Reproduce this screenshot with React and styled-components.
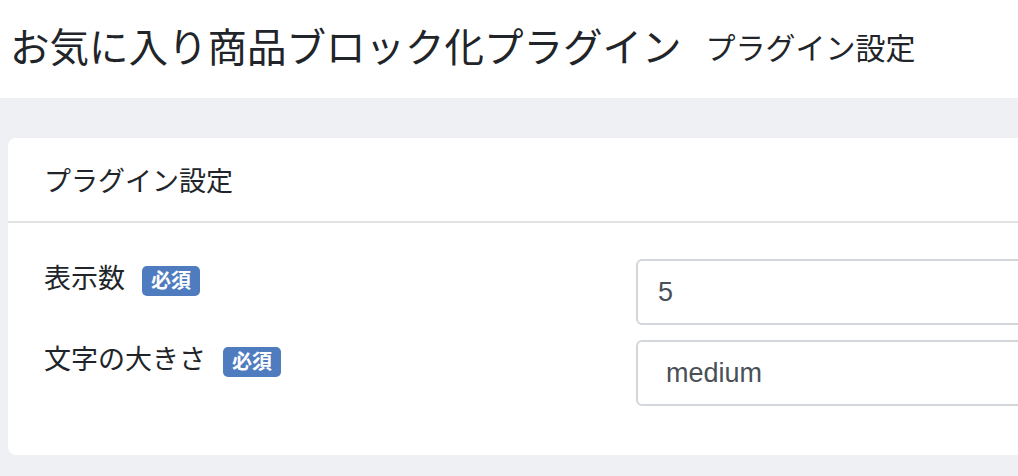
import React from 'react';
import styled, { createGlobalStyle } from 'styled-components';

const GlobalStyle = createGlobalStyle`
  html, body {
    margin: 0;
    padding: 0;
    overflow: hidden;
    background: #eef0f4;
  }
  body {
    font-family: "Liberation Sans", "Noto Sans CJK JP", sans-serif;
    color: #212529;
  }
`;

const Page = styled.div`
  width: 1400px;
  min-height: 476px;
`;

const Header = styled.header`
  display: flex;
  align-items: center;
  gap: 24px;
  height: 98px;
  padding: 0 10px;
  background: #fff;
  box-sizing: border-box;
`;

const Title = styled.h1`
  margin: 0;
  font-size: 39.5px;
  font-weight: 400;
  line-height: 1.2;
  color: #212529;
`;

const SubTitle = styled.span`
  font-size: 30px;
  line-height: 1.2;
  color: #212529;
`;

const Main = styled.main`
  padding: 40px 0 20px 8px;
`;

const Card = styled.section`
  background: #fff;
  border-radius: 8px;
  overflow: hidden;
`;

const CardHeader = styled.div`
  display: flex;
  align-items: center;
  height: 83px;
  padding: 0 36px;
  font-size: 27px;
  border-bottom: 2px solid #e2e2e2;
`;

const CardBody = styled.div`
  display: flex;
  flex-direction: column;
  gap: 15px;
  padding: 36px 36px 49px;
`;

const Row = styled.div`
  display: grid;
  grid-template-columns: 592px 1fr;
  align-items: start;
`;

const Label = styled.div`
  display: flex;
  align-items: center;
  gap: 17px;
  height: 40px;
  font-size: 27px;
  line-height: 40px;
`;

const Badge = styled.span`
  display: inline-flex;
  align-items: center;
  justify-content: center;
  height: 30px;
  margin-top: 4px;
  padding: 0 9px;
  border-radius: 5px;
  background: #4f7cbf;
  color: #fff;
  font-size: 20px;
  font-weight: 700;
  line-height: 1;
`;

const fieldBase = `
  box-sizing: border-box;
  width: 100%;
  height: 66px;
  border: 2px solid #d3d7dc;
  border-radius: 6px;
  background: #fff;
  color: #495057;
  font-family: "Liberation Sans", "Noto Sans CJK JP", sans-serif;
  font-size: 27px;
  outline: none;
`;

const TextInput = styled.input`
  ${fieldBase}
  padding: 0 20px;
`;

const Select = styled.select`
  ${fieldBase}
  appearance: none;
  padding: 0 28px;
`;

const fields = [
  { label: '表示数', type: 'input', value: '5' },
  { label: '文字の大きさ', type: 'select', value: 'medium' },
];

export default function App() {
  return (
    <Page>
      <GlobalStyle />
      <Header>
        <Title>お気に入り商品ブロック化プラグイン</Title>
        <SubTitle>プラグイン設定</SubTitle>
      </Header>
      <Main>
        <Card>
          <CardHeader>プラグイン設定</CardHeader>
          <CardBody>
            {fields.map((f) => (
              <Row key={f.label}>
                <Label>
                  {f.label}
                  <Badge>必須</Badge>
                </Label>
                {f.type === 'input' ? (
                  <TextInput type="text" defaultValue={f.value} />
                ) : (
                  <Select defaultValue={f.value}>
                    <option value="small">small</option>
                    <option value="medium">medium</option>
                    <option value="large">large</option>
                  </Select>
                )}
              </Row>
            ))}
          </CardBody>
        </Card>
      </Main>
    </Page>
  );
}
